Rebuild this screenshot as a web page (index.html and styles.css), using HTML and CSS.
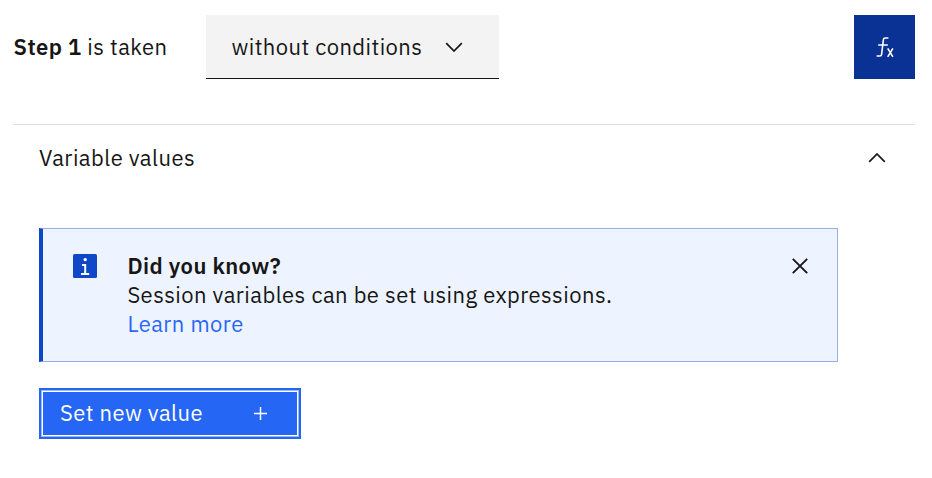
FILE: index.html
```html
<!DOCTYPE html>
<html lang="en">
<head>
<meta charset="utf-8">
<title>Step 1</title>
<link rel="stylesheet" href="styles.css">
</head>
<body>
<main class="editor">
  <header class="step-bar">
    <p class="step-label"><strong>Step 1</strong> <span>is taken</span></p>
    <button class="dropdown" type="button">
      <span class="dropdown-text">without conditions</span>
      <svg class="chevron" viewBox="0 0 18 10"><path d="M1.2 1.2L9 9l7.8-7.8"/></svg>
    </button>
    <button class="fx-button" type="button" aria-label="Expression">
      <svg class="fx-icon" viewBox="0 0 18 22"><path d="M12.4 2H9.2Q7.6 2 7.4 3.6L5.6 18.4Q5.4 20 3.8 20H.6M2.2 9h9.6"/><path d="M11.7 12.4l5.2 8.4M16.9 12.4l-5.2 8.4"/></svg>
    </button>
  </header>
  <section class="variables">
    <div class="section-head">
      <h2 class="section-title">Variable values</h2>
      <svg class="chevron" viewBox="0 0 18 10"><path d="M1.2 8.8L9 1l7.8 7.8"/></svg>
    </div>
    <div class="notice">
      <svg class="info-icon" viewBox="0 0 24 24"><rect width="24" height="24" rx="1.5"/><circle cx="12.2" cy="5.6" r="1.7"/><path d="M9 11h3.2v8.3M8 20h8.2"/></svg>
      <div class="notice-body">
        <strong class="notice-title">Did you know?</strong>
        <span class="notice-text">Session variables can be set using expressions.</span>
        <a class="notice-link">Learn more</a>
      </div>
      <svg class="close-icon" viewBox="0 0 16 16"><path d="M.8.8l14.4 14.4M15.2.8L.8 15.2"/></svg>
    </div>
    <button class="set-button" type="button">
      <span class="set-text">Set new value</span>
      <svg class="plus-icon" viewBox="0 0 13 13"><path d="M6.5 0v13M0 6.5h13"/></svg>
    </button>
  </section>
</main>
</body>
</html>
```
FILE: styles.css
```css
* { box-sizing: border-box; }
body {
  margin: 0;
  background: #fff;
  color: #161616;
  font: 22px/29px "IBM Plex Sans", Roboto, sans-serif;
  letter-spacing: 0.44px;
}
strong { font-weight: 600; }
button { font: inherit; color: inherit; letter-spacing: inherit; border: 0; border-radius: 0; padding: 0; }
svg { display: block; flex: none; fill: none; stroke: currentColor; }
.editor { padding: 15px 17px 0 13px; }
.step-bar { display: flex; height: 64px; align-items: center; }
.step-label { margin: 0; width: 193px; padding: 0 0 2px 0.6px; white-space: nowrap; }
.dropdown {
  display: flex;
  align-items: center;
  justify-content: space-between;
  width: 293px;
  height: 64px;
  padding: 1px 36px 0 25.4px;
  background: #f3f3f3;
  border-bottom: 1px solid #161616;
}
.dropdown-text { padding-bottom: 2px; }
.chevron { width: 18px; height: 10px; stroke-width: 1.7; }
.fx-button {
  display: flex;
  align-items: center;
  justify-content: center;
  width: 61px;
  height: 64px;
  margin-left: auto;
  background: #0a3194;
  color: #fff;
}
.fx-icon { width: 18px; height: 22px; stroke-width: 1.6; }
.variables { margin-top: 45px; border-top: 1px solid #e0e0e0; padding-left: 26px; }
.section-head { display: flex; align-items: center; justify-content: space-between; height: 65px; padding-right: 29px; }
.section-title { margin: 0; font-size: 22px; font-weight: 400; }
.notice {
  display: flex;
  align-items: flex-start;
  width: 799px;
  height: 134px;
  margin-top: 38px;
  padding: 22px 29px 0 30px;
  background: #edf4ff;
  border: 1px solid #97aee6;
  border-left: 4px solid #0f48c7;
}
.info-icon { width: 24px; height: 24px; margin: 3px 30px 0 0; color: #fff; stroke-width: 2; }
.info-icon rect { fill: #0f48c7; stroke: none; }
.info-icon circle { fill: #fff; stroke: none; }
.notice-body { display: flex; flex-direction: column; padding-left: 0.4px; }
.notice-link { color: #2b67f6; }
.close-icon { width: 16px; height: 16px; margin: 7px 0 0 auto; stroke-width: 1.9; }
.set-button {
  display: flex;
  align-items: center;
  justify-content: space-between;
  width: 262px;
  height: 51px;
  margin-top: 26px;
  padding: 0 34px 0 21px;
  background: #2666f5;
  color: #fff;
  box-shadow: inset 0 0 0 2px #2666f5, inset 0 0 0 3px #9dbaff, inset 0 0 0 4px #fff;
}
.set-text { padding-bottom: 2px; }
.plus-icon { width: 13px; height: 13px; stroke-width: 1.5; }
```
